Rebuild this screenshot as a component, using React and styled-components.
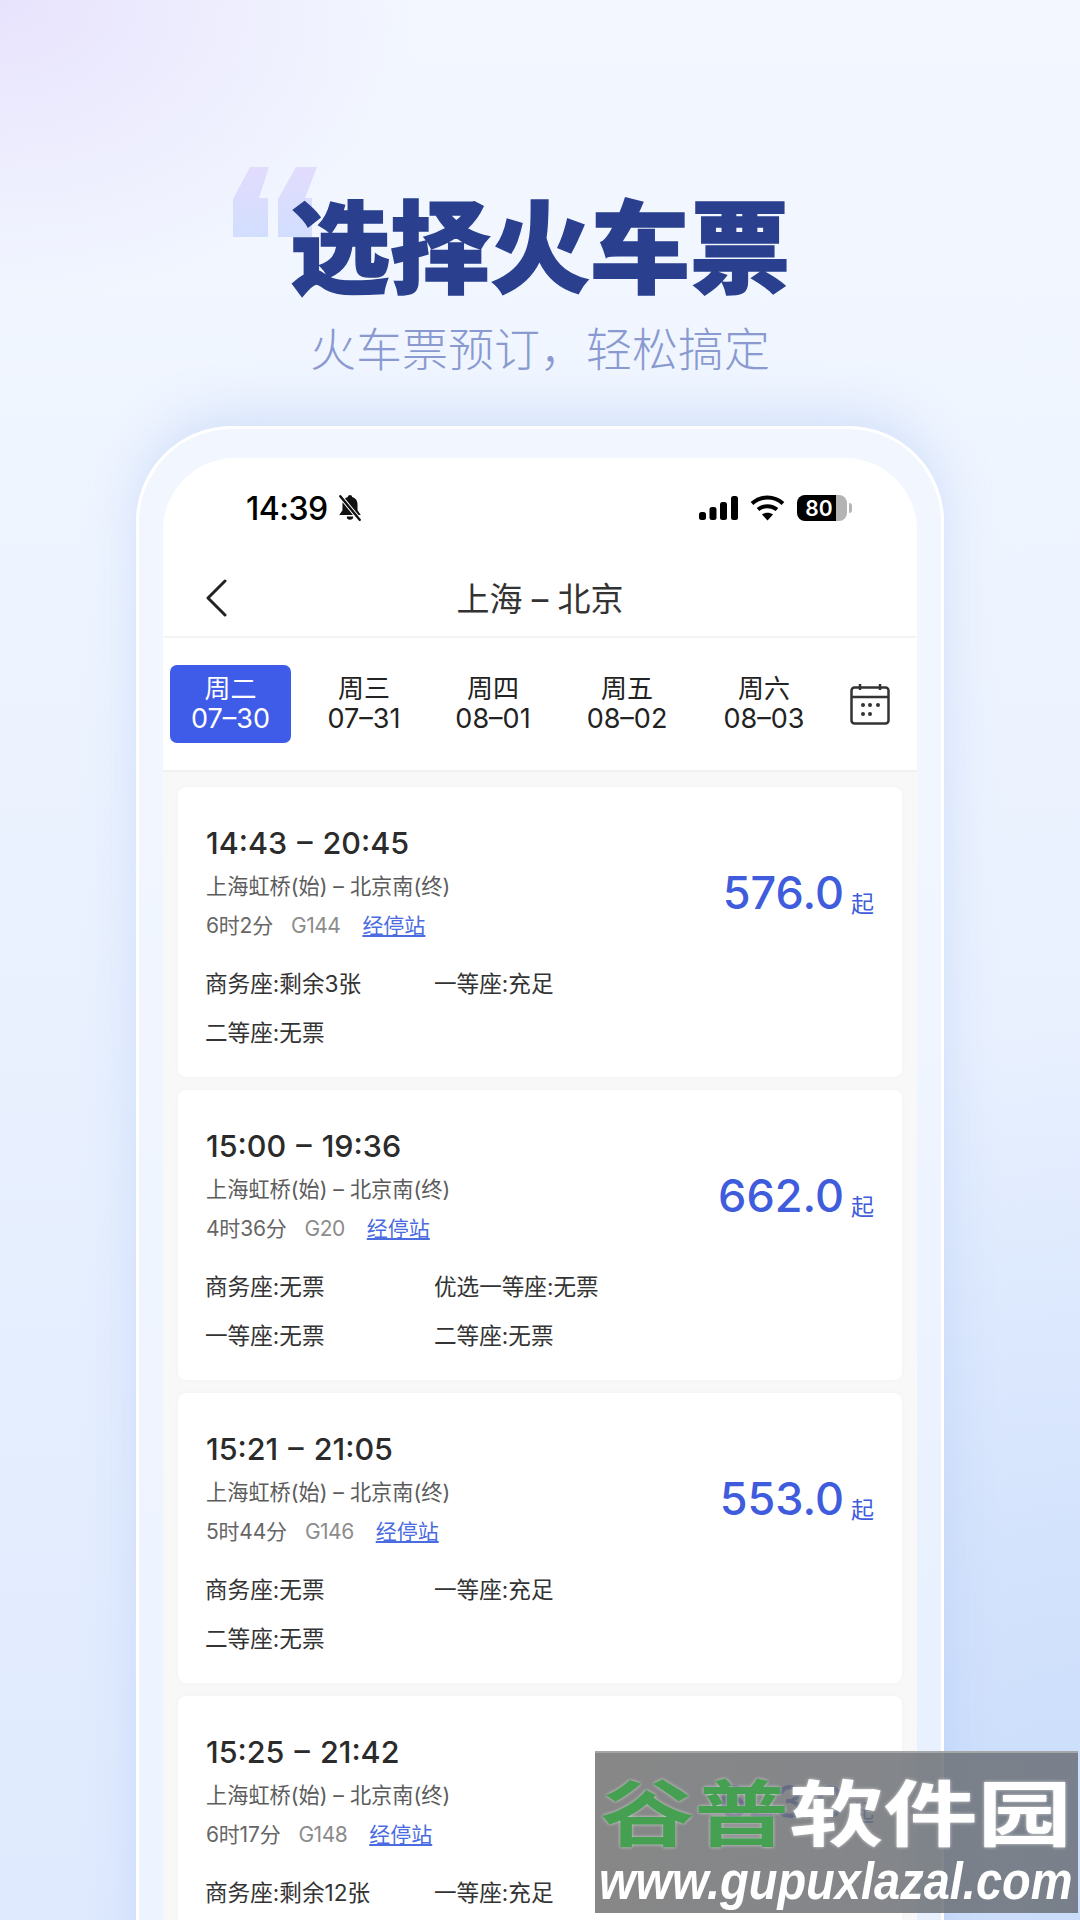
import React from 'react';
import styled, { createGlobalStyle } from 'styled-components';

const CJK = `Inter, "Noto Sans CJK SC", sans-serif`;

const GlobalStyle = createGlobalStyle`
  html, body {
    margin: 0;
    padding: 0;
    background: #eaf2ff;
  }
  * {
    box-sizing: border-box;
  }
`;

const Page = styled.div`
  position: relative;
  width: 1080px;
  height: 1920px;
  overflow: hidden;
  font-family: ${CJK};
  background:
    radial-gradient(ellipse 420px 300px at 0 0, #e8e3fd 0%, rgba(232, 227, 253, 0) 100%),
    radial-gradient(ellipse 700px 900px at 100% 100%, #c9dcfb 0%, rgba(201, 220, 251, 0) 100%),
    linear-gradient(180deg, #f3f7ff 0%, #eff5ff 25%, #dfeafe 100%);
`;

const Hero = styled.header`
  position: relative;
  height: 426px;
  padding-top: 190px;
  text-align: center;
`;

const QuoteMark = styled.svg`
  position: absolute;
  left: 233px;
  top: 167px;
`;

const Title = styled.h1`
  position: relative;
  margin: 0;
  font-size: 100px;
  line-height: 118px;
  font-weight: 900;
  color: #2a408f;
  -webkit-text-stroke: 1.5px #2a408f;
`;

const Subtitle = styled.p`
  margin: 12px 0 0;
  font-size: 46px;
  line-height: 58px;
  font-weight: 300;
  color: #8a9ad0;
`;

const Frame = styled.section`
  width: 808px;
  height: 1600px;
  margin-left: 136px;
  padding: 29px 24px 0;
  border: 3px solid #fff;
  border-radius: 96px 96px 0 0;
  background: rgba(243, 247, 255, 0.72);
  box-shadow: 0 -12px 50px rgba(150, 180, 240, 0.32);
`;

const Screen = styled.div`
  height: 100%;
  border-radius: 72px 72px 0 0;
  background: #fff;
  overflow: hidden;
`;

const StatusBar = styled.div`
  display: flex;
  align-items: center;
  justify-content: space-between;
  height: 100px;
  padding: 0 70px 0 83px;
`;

const StatusGroup = styled.div`
  display: flex;
  align-items: center;
  gap: ${(props) => props.$gap}px;
`;

const Clock = styled.span`
  font-size: 32px;
  font-weight: 500;
  letter-spacing: -0.5px;
  color: #000;
`;

const Battery = styled.span`
  position: relative;
  display: flex;
  align-items: center;
  justify-content: center;
  width: 50px;
  height: 26px;
  padding-right: 6px;
  border-radius: 8px;
  background: linear-gradient(90deg, #000 0%, #000 78%, #b4b4b4 78%, #b4b4b4 100%);
  color: #fff;
  font-size: 21px;
  font-weight: 600;

  &::after {
    content: '';
    position: absolute;
    right: -5px;
    top: 8px;
    width: 3px;
    height: 10px;
    border-radius: 0 3px 3px 0;
    background: #b4b4b4;
  }
`;

const NavBar = styled.div`
  position: relative;
  display: flex;
  align-items: center;
  justify-content: center;
  height: 80px;
  border-bottom: 2px solid #f3f3f4;
`;

const BackIcon = styled.svg`
  position: absolute;
  left: 42px;
  top: 21px;
`;

const NavTitle = styled.h2`
  margin: 0;
  font-size: 33px;
  font-weight: 400;
  color: #333;
`;

const DateRow = styled.div`
  display: grid;
  grid-template-columns: 121px 146px 112px 156px 118px 1fr;
  align-items: center;
  height: 134px;
  padding-left: 7px;
  border-bottom: 2px solid #f1f1f2;
`;

const DateTab = styled.div`
  display: flex;
  flex-direction: column;
  align-items: center;
  justify-content: center;
  height: 78px;
  border-radius: 7px;
  font-size: 26px;
  line-height: 30px;
  color: ${(props) => (props.$active ? '#fff' : '#222')};
  background: ${(props) => (props.$active ? '#3f5ce8' : 'transparent')};
`;

const DateNumber = styled.span`
  font-size: 27px;
`;

const CalendarIcon = styled.svg`
  margin-left: 27px;
`;

const CardList = styled.div`
  display: flex;
  flex-direction: column;
  gap: 13px;
  padding: 15px 15px 0;
  background: #f8f8f9;
`;

const Card = styled.article`
  height: 290px;
  padding: 36px 28px 0 28px;
  border-radius: 8px;
  background: #fff;
  box-shadow: 0 0 6px rgba(0, 0, 0, 0.03);
`;

const TopRow = styled.div`
  display: flex;
  align-items: center;
  justify-content: space-between;
`;

const Times = styled.div`
  font-size: 30.5px;
  line-height: 40px;
  font-weight: 500;
  word-spacing: 2px;
  color: #2b2b2b;
`;

const Route = styled.div`
  margin-top: 8px;
  font-size: 21.2px;
  line-height: 30px;
  color: #5c5c5c;
`;

const InfoRow = styled.div`
  display: flex;
  margin-top: 10px;
  font-size: 21px;
  line-height: 30px;
  letter-spacing: -0.2px;
  color: #666;
`;

const TrainCode = styled.span`
  margin-left: 18px;
  letter-spacing: -0.5px;
  color: #8c8c8c;
`;

const StopsLink = styled.a`
  margin-left: 22px;
  letter-spacing: 0;
  color: #4a6ce0;
  text-decoration: underline;
`;

const PriceBox = styled.div`
  display: flex;
  align-items: flex-end;
  gap: 7px;
  padding-top: 22px;
  color: #3f5cdc;
`;

const Price = styled.span`
  font-size: 45px;
  line-height: 56px;
  font-weight: 500;
`;

const PriceUnit = styled.span`
  margin-bottom: 2px;
  font-size: 23px;
  line-height: 30px;
`;

const SeatGrid = styled.div`
  display: grid;
  grid-template-columns: 229px 1fr;
  row-gap: 19px;
  margin: 28px 0 0 -1px;
  font-size: 22.6px;
  line-height: 30px;
  color: #333;
`;

const Watermark = styled.aside`
  position: absolute;
  left: 595px;
  top: 1751px;
  width: 483px;
  height: 162px;
  overflow: hidden;
  background: linear-gradient(90deg, rgba(112, 112, 112, 0.84), rgba(105, 110, 118, 0.84));
  border-top: 2px solid rgba(170, 170, 170, 0.9);
  font-family: "Liberation Sans", "Noto Sans CJK SC", sans-serif;
`;

const MarkName = styled.div`
  padding: 20px 0 0 4px;
  font-size: 72px;
  line-height: 84px;
  font-weight: 700;
  white-space: nowrap;
  text-shadow: 0 0 3px rgba(235, 235, 235, 0.8);
  transform: scaleX(1.31);
  transform-origin: left center;
`;

const MarkGreen = styled.span`
  color: #46a052;
`;

const MarkWhite = styled.span`
  color: #fff;
`;

const MarkUrl = styled.div`
  margin-top: -3px;
  padding-left: 4px;
  font-size: 47px;
  line-height: 54px;
  font-weight: 700;
  font-style: italic;
  color: #fff;
  white-space: nowrap;
  transform: scaleY(1.1);
`;

const dates = [
  { day: '周二', date: '07–30', active: true },
  { day: '周三', date: '07–31' },
  { day: '周四', date: '08–01' },
  { day: '周五', date: '08–02' },
  { day: '周六', date: '08–03' },
];

const trains = [
  {
    times: '14:43 – 20:45',
    duration: '6时2分',
    code: 'G144',
    price: '576.0',
    seats: ['商务座:剩余3张', '一等座:充足', '二等座:无票'],
  },
  {
    times: '15:00 – 19:36',
    duration: '4时36分',
    code: 'G20',
    price: '662.0',
    seats: ['商务座:无票', '优选一等座:无票', '一等座:无票', '二等座:无票'],
  },
  {
    times: '15:21 – 21:05',
    duration: '5时44分',
    code: 'G146',
    price: '553.0',
    seats: ['商务座:无票', '一等座:充足', '二等座:无票'],
  },
  {
    times: '15:25 – 21:42',
    duration: '6时17分',
    code: 'G148',
    price: '623.0',
    seats: ['商务座:剩余12张', '一等座:充足', '二等座:无票'],
  },
];

function TrainCard({ train }) {
  return (
    <Card>
      <TopRow>
        <div>
          <Times>{train.times}</Times>
          <Route>上海虹桥(始) – 北京南(终)</Route>
          <InfoRow>
            <span>{train.duration}</span>
            <TrainCode>{train.code}</TrainCode>
            <StopsLink>经停站</StopsLink>
          </InfoRow>
        </div>
        <PriceBox>
          <Price>{train.price}</Price>
          <PriceUnit>起</PriceUnit>
        </PriceBox>
      </TopRow>
      <SeatGrid>
        {train.seats.map((seat) => (
          <span key={seat}>{seat}</span>
        ))}
      </SeatGrid>
    </Card>
  );
}

export default function App() {
  return (
    <Page>
      <GlobalStyle />
      <Hero>
        <QuoteMark width="84" height="70" viewBox="0 0 84 70">
          <defs>
            <linearGradient id="quote" x1="0" y1="0" x2="0" y2="1">
              <stop offset="0" stopColor="#e2dcfd" />
              <stop offset="1" stopColor="#d2defe" />
            </linearGradient>
          </defs>
          <path d="M17 0h19L26 31h9v39H0V32zM63 0h21L72 31h7v39H45V32z" fill="url(#quote)" />
        </QuoteMark>
        <Title>选择火车票</Title>
        <Subtitle>火车票预订，轻松搞定</Subtitle>
      </Hero>
      <Frame>
        <Screen>
          <StatusBar>
            <StatusGroup $gap={8}>
              <Clock>14:39</Clock>
              <svg width="28" height="28" viewBox="0 0 26 26">
                <path d="M13 1c-1 0-2 .8-2 1.800C7.500 3.800 6 6.500 6 10v5l-3 4.500h20L20 15v-5c0-3.500-1.500-6.200-5-7.200C15 1.800 14 1 13 1zM10 21a3 3 0 0 0 6 0z" fill="#111" />
                <path d="M4 2l18 22" stroke="#fff" strokeWidth="4" />
                <path d="M4 2l18 22" stroke="#111" strokeWidth="2.200" strokeLinecap="round" />
              </svg>
            </StatusGroup>
            <StatusGroup $gap={12}>
              <svg width="39" height="24" viewBox="0 0 39 24">
                <rect x="0" y="16" width="7" height="8" rx="2.500" fill="#000" />
                <rect x="10.500" y="11" width="7" height="13" rx="2.500" fill="#000" />
                <rect x="21" y="6" width="7" height="18" rx="2.500" fill="#000" />
                <rect x="32" y="0" width="7" height="24" rx="2.500" fill="#000" />
              </svg>
              <svg width="35" height="26" viewBox="0 0 35 26">
                <path d="M2 8.500C11 .5 24 .5 33 8.500" fill="none" stroke="#000" strokeWidth="4" />
                <path d="M8 14.500c5.500-4.500 13.500-4.500 19 0" fill="none" stroke="#000" strokeWidth="4" />
                <path d="M12 19.500c3-2.500 8-2.500 11 0l-5.500 6z" fill="#000" />
              </svg>
              <Battery>80</Battery>
            </StatusGroup>
          </StatusBar>
          <NavBar>
            <BackIcon width="22" height="38" viewBox="0 0 22 38">
              <path d="M20 2L3 19l17 17" fill="none" stroke="#222" strokeWidth="3" strokeLinecap="round" strokeLinejoin="round" />
            </BackIcon>
            <NavTitle>上海 – 北京</NavTitle>
          </NavBar>
          <DateRow>
            {dates.map((item) => (
              <DateTab key={item.date} $active={item.active}>
                <span>{item.day}</span>
                <DateNumber>{item.date}</DateNumber>
              </DateTab>
            ))}
            <CalendarIcon width="40" height="42" viewBox="0 0 40 42">
              <rect x="1.500" y="4.500" width="37" height="36" rx="3" fill="none" stroke="#333" strokeWidth="2.500" />
              <path d="M1.500 14h37M10 1v6M30 1v6" fill="none" stroke="#333" strokeWidth="2.500" />
              <circle cx="13" cy="22" r="2" fill="#333" />
              <circle cx="20" cy="22" r="2" fill="#333" />
              <circle cx="28" cy="22" r="2" fill="#333" />
              <circle cx="13" cy="31" r="2" fill="#333" />
              <circle cx="20" cy="31" r="2" fill="#333" />
            </CalendarIcon>
          </DateRow>
          <CardList>
            {trains.map((train) => (
              <TrainCard key={train.code} train={train} />
            ))}
          </CardList>
        </Screen>
      </Frame>
      <Watermark>
        <MarkName>
          <MarkGreen>谷普</MarkGreen>
          <MarkWhite>软件园</MarkWhite>
        </MarkName>
        <MarkUrl>www.gupuxlazal.com</MarkUrl>
      </Watermark>
    </Page>
  );
}
